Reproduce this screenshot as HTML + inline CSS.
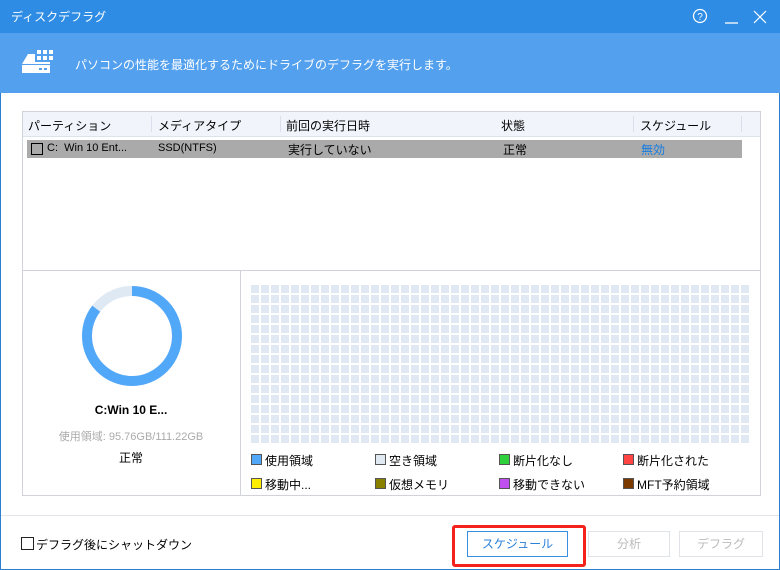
<html><head><style>
body{margin:0;width:780px;height:570px;overflow:hidden;background:#fff;font-family:"Liberation Sans","Noto Sans CJK JP",sans-serif;font-size:12px;color:#000;position:relative}
.a{position:absolute}
</style></head><body>
<div class="a" style="left:0;top:0;width:778px;height:568px;border:1px solid #2d7fd0"></div>
<div class="a" style="left:0;top:0;width:780px;height:33px;background:#2e8ce4"></div>
<div class="a" style="left:11px;top:8px;color:#fff;font-size:12px">ディスクデフラグ</div>
<svg class="a" style="left:690px;top:8px" width="80" height="18"><circle cx="10" cy="8" r="6.5" fill="none" stroke="#fff" stroke-width="1.2"/><text x="10" y="12" font-size="10" fill="#fff" text-anchor="middle" font-family="Liberation Sans">?</text><line x1="35" y1="15" x2="48" y2="15" stroke="#fff" stroke-width="1.3"/><path d="M64 3L76 15M76 3L64 15" stroke="#fff" stroke-width="1.2"/></svg>
<div class="a" style="left:0;top:33px;width:780px;height:60px;background:#52a0ee"></div>
<svg class="a" style="left:22px;top:50px" width="32" height="24"><rect x="15" y="0" width="4" height="4" fill="#fff"/><rect x="21" y="0" width="4" height="4" fill="#fff"/><rect x="27" y="0" width="4" height="4" fill="#fff"/><rect x="15" y="6" width="4" height="4" fill="#fff"/><rect x="21" y="6" width="4" height="4" fill="#fff"/><rect x="27" y="6" width="4" height="4" fill="#fff"/><path d="M6 4H13V12H28V14H0Z" fill="#fff"/><rect x="0" y="15" width="28" height="8" fill="#fff"/><rect x="17" y="18" width="3" height="2" fill="#52a0ee"/><rect x="22" y="18" width="3" height="2" fill="#52a0ee"/></svg>
<div class="a" style="left:75px;top:56px;color:#fff;font-size:12px">パソコンの性能を最適化するためにドライブのデフラグを実行します。</div>
<div class="a" style="left:22px;top:111px;width:737px;height:383px;border:1px solid #d0d4d9"></div>
<div class="a" style="left:23px;top:112px;width:737px;height:24px;background:#f1f5fb;border-bottom:1px solid #dde3ea"></div>
<div class="a" style="left:28px;top:117px">パーティション</div>
<div class="a" style="left:151px;top:116px;width:1px;height:16px;background:#dde"></div>
<div class="a" style="left:158px;top:117px">メディアタイプ</div>
<div class="a" style="left:280px;top:116px;width:1px;height:16px;background:#dde"></div>
<div class="a" style="left:286px;top:117px">前回の実行日時</div>
<div class="a" style="left:501px;top:117px">状態</div>
<div class="a" style="left:633px;top:116px;width:1px;height:16px;background:#dde"></div>
<div class="a" style="left:640px;top:117px">スケジュール</div>
<div class="a" style="left:741px;top:116px;width:1px;height:16px;background:#dde"></div>
<div class="a" style="left:27px;top:140px;width:715px;height:18px;background:#aaaaaa"></div>
<div class="a" style="left:31px;top:143px;width:10px;height:10px;border:1px solid #000"></div>
<div class="a" style="left:47px;top:142px;font-size:11px">C:&nbsp; Win 10 Ent...</div>
<div class="a" style="left:158px;top:142px;font-size:11px">SSD(NTFS)</div>
<div class="a" style="left:288px;top:141px">実行していない</div>
<div class="a" style="left:503px;top:141px">正常</div>
<div class="a" style="left:641px;top:141px;color:#1a7ee0">無効</div>
<div class="a" style="left:22px;top:270px;width:738px;height:1px;background:#d0d4d9"></div>
<div class="a" style="left:240px;top:270px;width:1px;height:225px;background:#d0d4d9"></div>
<svg class="a" style="left:82px;top:286px" width="100" height="100"><circle cx="50" cy="50" r="45" fill="none" stroke="#dfe9f4" stroke-width="10"/><circle cx="50" cy="50" r="45" fill="none" stroke="#52a8f8" stroke-width="10" stroke-dasharray="241 283" transform="rotate(-90 50 50)"/></svg>
<div class="a" style="left:22px;top:403px;width:218px;text-align:center;font-weight:bold">C:Win 10 E...</div>
<div class="a" style="left:22px;top:428px;width:218px;text-align:center;color:#aaa;font-size:11px">使用領域: 95.76GB/111.22GB</div>
<div class="a" style="left:22px;top:449px;width:218px;text-align:center">正常</div>
<svg class="a" style="left:251px;top:285px" width="500" height="160"><defs><pattern id="p" width="10" height="10" patternUnits="userSpaceOnUse"><rect width="8" height="8" fill="#dfe8f3"/></pattern></defs><rect width="498" height="158" fill="url(#p)"/></svg>
<div class="a" style="left:251px;top:454px;width:9px;height:9px;border:1px solid #555;background:#52a8f8"></div><div class="a" style="left:265px;top:452px">使用領域</div>
<div class="a" style="left:375px;top:454px;width:9px;height:9px;border:1px solid #555;background:#e0e8f2"></div><div class="a" style="left:389px;top:452px">空き領域</div>
<div class="a" style="left:499px;top:454px;width:9px;height:9px;border:1px solid #555;background:#2ed03c"></div><div class="a" style="left:513px;top:452px">断片化なし</div>
<div class="a" style="left:623px;top:454px;width:9px;height:9px;border:1px solid #555;background:#f44"></div><div class="a" style="left:637px;top:452px">断片化された</div>
<div class="a" style="left:251px;top:478px;width:9px;height:9px;border:1px solid #555;background:#fe0"></div><div class="a" style="left:265px;top:476px">移動中...</div>
<div class="a" style="left:375px;top:478px;width:9px;height:9px;border:1px solid #555;background:#8a8000"></div><div class="a" style="left:389px;top:476px">仮想メモリ</div>
<div class="a" style="left:499px;top:478px;width:9px;height:9px;border:1px solid #555;background:#c050f0"></div><div class="a" style="left:513px;top:476px">移動できない</div>
<div class="a" style="left:623px;top:478px;width:9px;height:9px;border:1px solid #555;background:#7a3a00"></div><div class="a" style="left:637px;top:476px">MFT予約領域</div>
<div class="a" style="left:1px;top:515px;width:778px;height:1px;background:#e2e6ea"></div>
<div class="a" style="left:21px;top:537px;width:11px;height:11px;border:1px solid #222"></div>
<div class="a" style="left:36px;top:536px">デフラグ後にシャットダウン</div>
<div class="a" style="left:452px;top:525px;width:128px;height:36px;border:3px solid #f5221b;border-radius:3px"></div>
<div class="a" style="left:467px;top:531px;width:99px;height:24px;border:1px solid #3a8ee0;color:#2a7fd8;text-align:center;line-height:24px">スケジュール</div>
<div class="a" style="left:588px;top:531px;width:80px;height:24px;border:1px solid #e0e4e8;color:#bbb;text-align:center;line-height:24px">分析</div>
<div class="a" style="left:679px;top:531px;width:82px;height:24px;border:1px solid #e0e4e8;color:#bbb;text-align:center;line-height:24px">デフラグ</div>
</body></html>
